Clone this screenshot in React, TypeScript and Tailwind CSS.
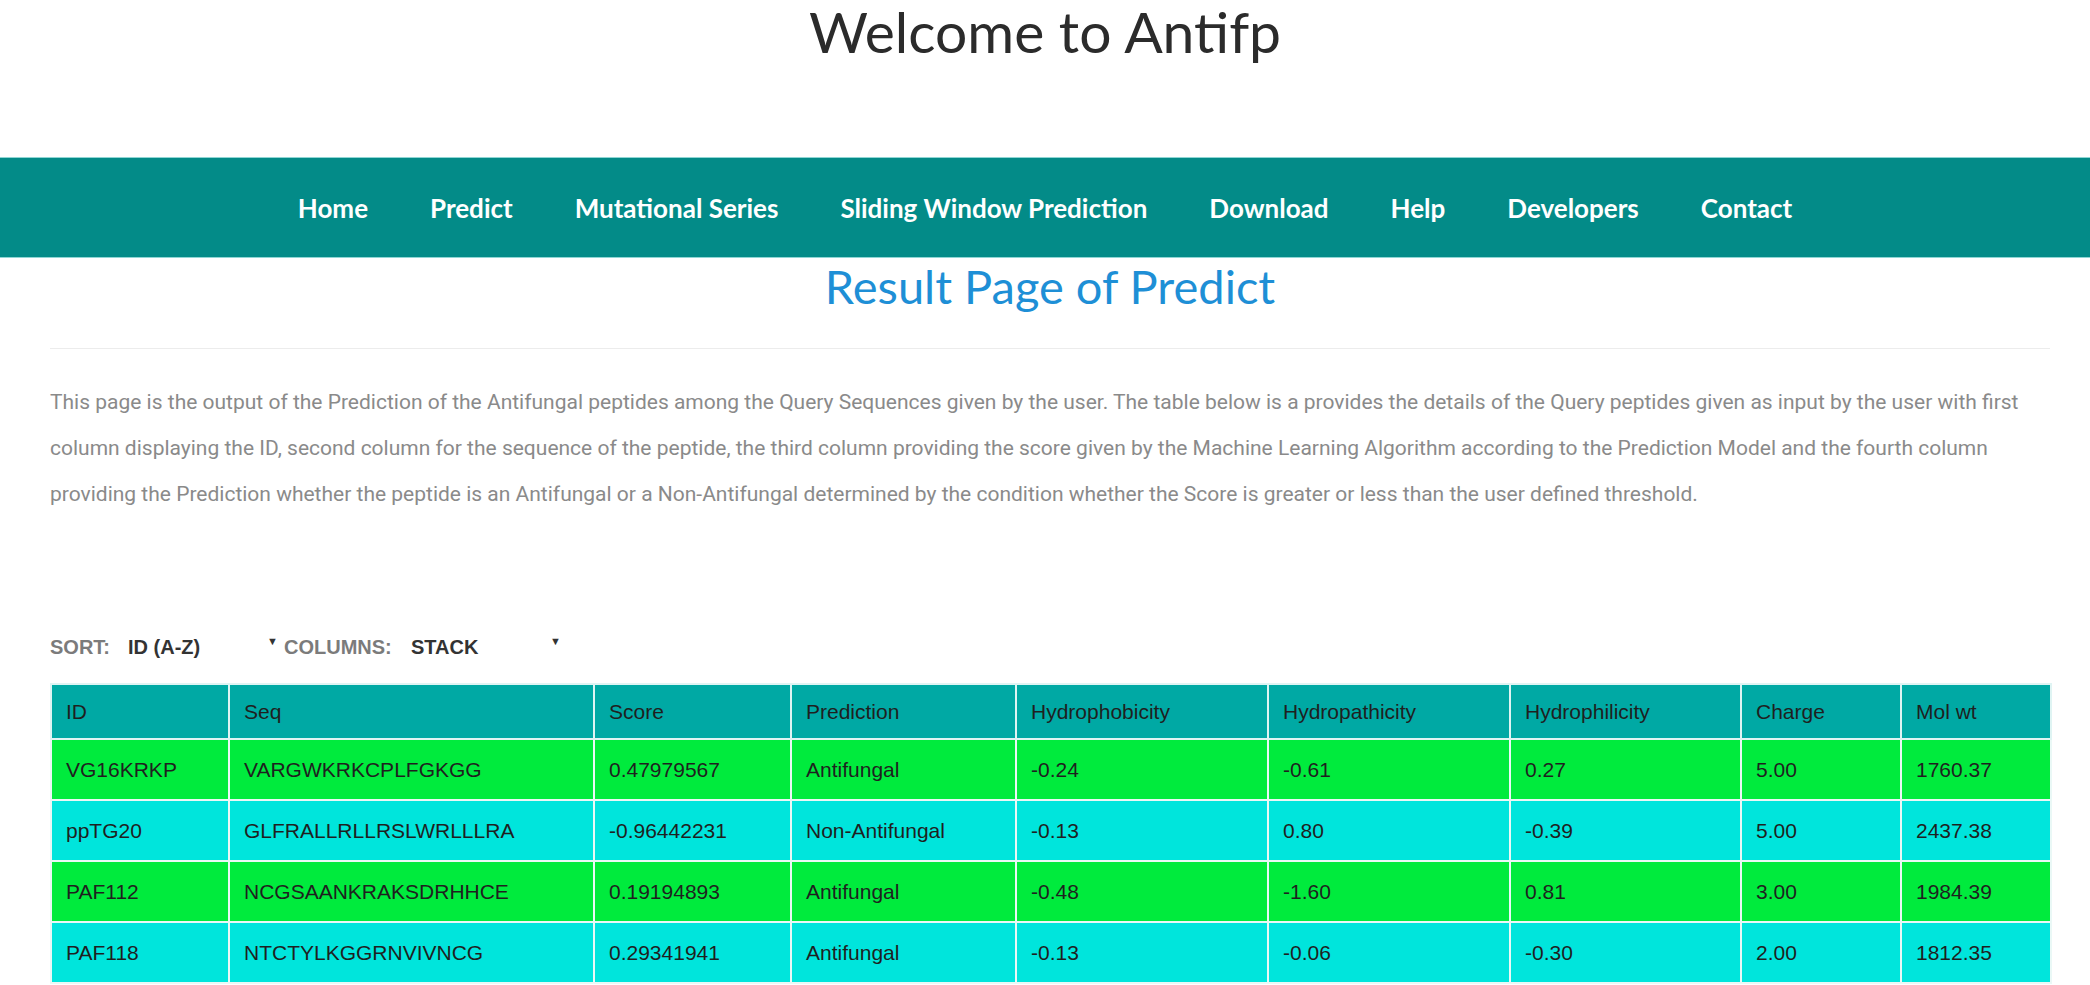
import React from "react";

const navLinks = [
  "Home",
  "Predict",
  "Mutational Series",
  "Sliding Window Prediction",
  "Download",
  "Help",
  "Developers",
  "Contact",
];

const columns = [
  { label: "ID", w: "w-[178px]" },
  { label: "Seq", w: "w-[365px]" },
  { label: "Score", w: "w-[197px]" },
  { label: "Prediction", w: "w-[225px]" },
  { label: "Hydrophobicity", w: "w-[252px]" },
  { label: "Hydropathicity", w: "w-[242px]" },
  { label: "Hydrophilicity", w: "w-[231px]" },
  { label: "Charge", w: "w-[160px]" },
  { label: "Mol wt", w: "w-[150px]" },
];

const rows = [
  ["VG16KRKP", "VARGWKRKCPLFGKGG", "0.47979567", "Antifungal", "-0.24", "-0.61", "0.27", "5.00", "1760.37"],
  ["ppTG20", "GLFRALLRLLRSLWRLLLRA", "-0.96442231", "Non-Antifungal", "-0.13", "0.80", "-0.39", "5.00", "2437.38"],
  ["PAF112", "NCGSAANKRAKSDRHHCE", "0.19194893", "Antifungal", "-0.48", "-1.60", "0.81", "3.00", "1984.39"],
  ["PAF118", "NTCTYLKGGRNVIVNCG", "0.29341941", "Antifungal", "-0.13", "-0.06", "-0.30", "2.00", "1812.35"],
];

// fake select: value text with the little triangle at the right
const SelectMock = ({ value, width }: { value: string; width: string }) => (
  <span className={`relative inline-flex items-center ${width} text-[#333]`}>
    {value}
    <span className="absolute right-0 top-[-1px] text-[11px] text-[#333]">▼</span>
  </span>
);

export default function App() {
  return (
    <div className="w-[2090px] min-h-screen bg-white">
      {/* header */}
      <header className="h-[157px] flex justify-center">
        <h1 className="font-['Lato','Open_Sans',sans-serif] text-[57px] leading-[1.1] text-[#2b2b2b]">
          Welcome to Antifp
        </h1>
      </header>

      {/* nav */}
      <nav className="h-[101px] bg-[#038b88] border-y border-[#8fd6d4] flex items-center justify-center gap-[62px]">
        {navLinks.map((l) => (
          <a key={l} href="#" className="font-['Lato',sans-serif] font-bold text-[26px] text-white leading-none">
            {l}
          </a>
        ))}
      </nav>

      <main className="pl-[50px] pr-[40px]">
        <h2 className="mt-[5px] text-center font-['Lato',sans-serif] text-[47px] leading-none text-[#1e8fd6]">
          Result Page of Predict
        </h2>
        <hr className="mt-[38px] border-0 border-t border-[#ececec]" />

        <p className="mt-[30px] font-['Roboto',sans-serif] text-[21px] leading-[46px] text-[#8a8a8a]">
          This page is the output of the Prediction of the Antifungal peptides among the Query Sequences given by the user. The table below is a provides the details of the Query peptides given as input by the user with first column displaying the ID, second column for the sequence of the peptide, the third column providing the score given by the Machine Learning Algorithm according to the Prediction Model and the fourth column providing the Prediction whether the peptide is an Antifungal or a Non-Antifungal determined by the condition whether the Score is greater or less than the user defined threshold.
        </p>

        {/* sort / columns */}
        <div className="mt-[118px] h-[24px] flex items-center font-['Liberation_Sans',sans-serif] font-bold text-[20px] leading-none">
          <span className="text-[#7b7b7b] w-[78px]">SORT:</span>
          <SelectMock value="ID (A-Z)" width="w-[150px]" />
          <span className="text-[#7b7b7b] ml-[6px] w-[127px]">COLUMNS:</span>
          <SelectMock value="STACK" width="w-[150px]" />
        </div>

        <table className="mt-[24px] w-[2000px] table-fixed border-collapse font-['Liberation_Sans',sans-serif] text-[21px] text-[#1f1f1f]">
          <thead>
            <tr className="h-[55px] bg-[#00a9a4]">
              {columns.map((c) => (
                <th key={c.label} className={`${c.w} border-2 border-[#dff4f3] pl-[14px] text-left font-normal`}>
                  {c.label}
                </th>
              ))}
            </tr>
          </thead>
          <tbody>
            {rows.map((r, i) => (
              <tr key={r[0]} className={`h-[61px] ${i % 2 === 0 ? "bg-[#00eb3d]" : "bg-[#00e5dc]"}`}>
                {r.map((cell, j) => (
                  <td key={j} className="border-2 border-[#eaf8f6] pl-[14px]">
                    {cell}
                  </td>
                ))}
              </tr>
            ))}
          </tbody>
        </table>
      </main>
    </div>
  );
}
